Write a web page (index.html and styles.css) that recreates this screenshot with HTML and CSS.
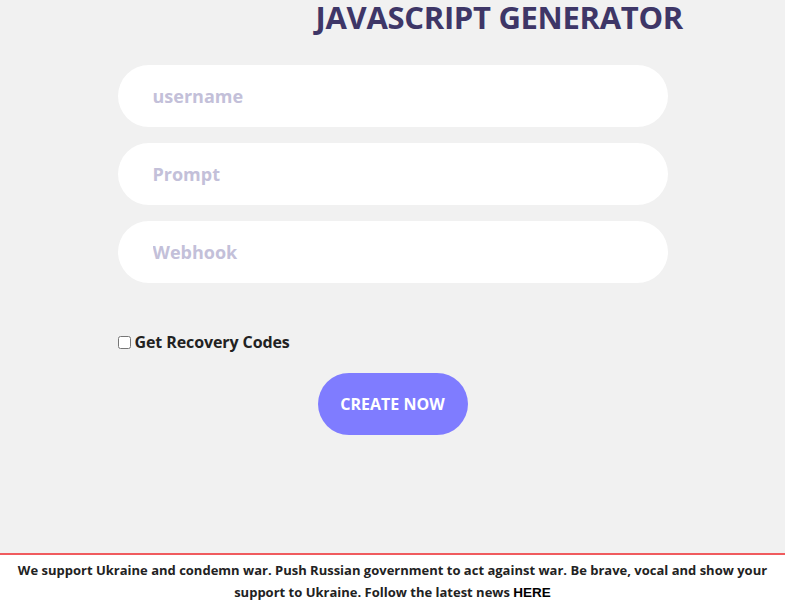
FILE: index.html
```html
<!DOCTYPE html>
<html>
<head>
<meta charset="utf-8">
<link rel="stylesheet" href="styles.css">
</head>
<body>
<div class="page">
  <h1 class="title">JAVASCRIPT GENERATOR</h1>
  <form class="form">
    <input class="field" type="text" placeholder="username">
    <input class="field" type="text" placeholder="Prompt">
    <input class="field" type="text" placeholder="Webhook">
    <label class="check"><input type="checkbox" class="box"> Get Recovery Codes</label>
    <div class="actions"><button type="button" class="btn">CREATE NOW</button></div>
  </form>
</div>
<div class="footer">
  <p>We support Ukraine and condemn war. Push Russian government to act against war. Be brave, vocal and show your support to Ukraine. Follow the latest news <a class="here" href="#">HERE</a></p>
</div>
</body>
</html>
```

FILE: styles.css
```css
html, body {
  margin: 0;
  padding: 0;
  background: #f1f1f1;
  font-family: "Open Sans", "Noto Sans", sans-serif;
}
.page {
  width: 550px;
  margin: 0 auto;
}
.title {
  margin: -3px 0 0 0;
  padding-left: 198px;
  white-space: nowrap;
  font-size: 31px;
  line-height: 40px;
  font-weight: 700;
  color: #3e3667;
  letter-spacing: -0.3px;
}
.form {
  display: flex;
  flex-direction: column;
  gap: 16px;
  margin-top: 28px;
}
.field {
  box-sizing: border-box;
  height: 62px;
  width: 550px;
  border: none;
  border-radius: 31px;
  background: #fff;
  padding: 0 35px;
  font-family: inherit;
  font-size: 18px;
  font-weight: 700;
  color: #333;
  outline: none;
}
.field::placeholder {
  color: #c3c0d9;
}
.check {
  display: flex;
  align-items: center;
  margin-top: 32px;
  font-size: 16px;
  font-weight: 700;
  color: #222;
  gap: 4px;
  letter-spacing: -0.1px;
}
.box {
  margin: 0;
  width: 13px;
  height: 13px;
}
.actions {
  display: flex;
  justify-content: center;
  margin-top: 4px;
}
.btn {
  width: 150px;
  height: 62px;
  border: none;
  border-radius: 31px;
  background: #7f7cff;
  color: #fff;
  font-family: inherit;
  font-size: 16px;
  font-weight: 700;
}
.footer {
  position: fixed;
  left: 0;
  right: 0;
  bottom: 0;
  background: #fff;
  border-top: 2px solid #f05b5e;
  text-align: center;
}
.footer p {
  margin: 0;
  padding: 4px 8px 7px;
  font-size: 13px;
  line-height: 22px;
  font-weight: 700;
  color: #222;
}
.here {
  color: #000;
  text-decoration: none;
  font-family: "Liberation Sans", Arial, sans-serif;
  font-size: 13.5px;
  line-height: 1;
}
```
